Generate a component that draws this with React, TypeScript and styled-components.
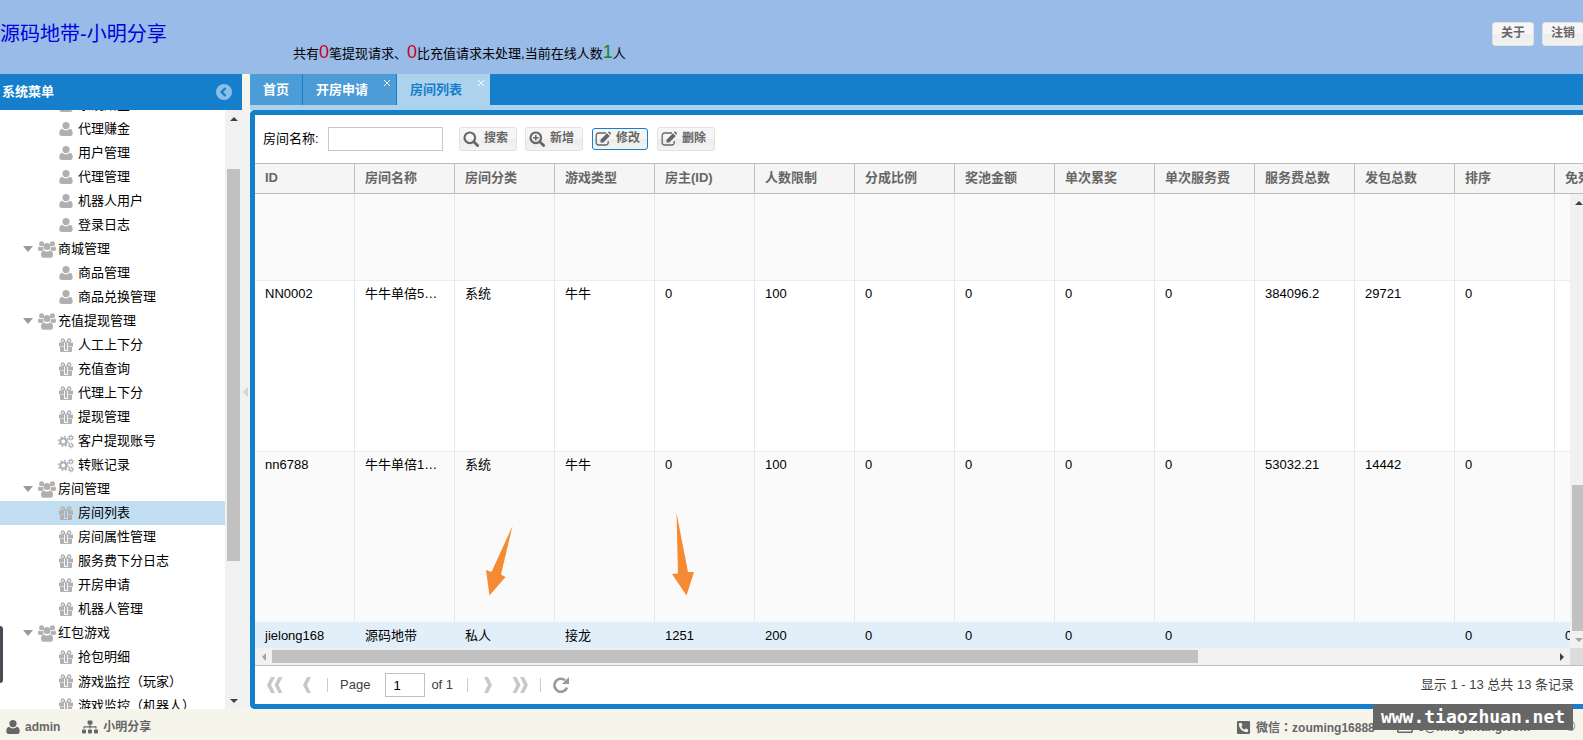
import React from "react";
import styled, { createGlobalStyle, css } from "styled-components";
import { FaSitemap, FaPhoneSquareAlt, FaRegEnvelope } from "react-icons/fa";

const Global = createGlobalStyle`
  * { box-sizing: border-box; }
  html, body, #root { height: 100%; }
  body { margin: 0; overflow: hidden; }
  body, button, input { font-family: "Liberation Sans", "Noto Sans CJK SC", sans-serif; font-size: 13px; }
  body { color: #000; line-height: 16px; }
`;

const Page = styled.div`
  position: relative;
  display: flex;
  flex-direction: column;
  height: 100vh;
  background: #f5f5ec;
`;

const Banner = styled.header`
  display: flex;
  flex: none;
  align-items: flex-start;
  height: 74px;
  background: #99bbe8;
`;

const Brand = styled.a`
  width: 293px;
  padding-top: 20px;
  font-size: 20px;
  line-height: 28px;
  color: #0000dc;
  text-decoration: none;
`;

const Notice = styled.p`
  flex: 1;
  margin: 0;
  padding-top: 40px;
  line-height: 24px;
  white-space: nowrap;
`;

const Count = styled.span<{ $tone: string }>`
  font-size: 18px;
  color: ${(p) => p.$tone};
`;

const BannerActions = styled.div`
  display: flex;
  gap: 8px;
  padding-top: 22px;
  margin-right: -1px;
`;

const Button = styled.button<{ $active?: boolean }>`
  display: flex;
  flex: none;
  align-items: center;
  gap: 5px;
  width: 58px;
  height: 24px;
  padding: 0 0 0 3px;
  border: 1px solid #e1e1e1;
  border-radius: 3px;
  background: linear-gradient(#f6f6f6 50%, #ededed 50%, #f3f3f3);
  color: #666;
  font-size: 12px;
  font-weight: bold;
  line-height: 16px;
  ${(p) => p.$active && css`
    width: 56px;
    height: 22px;
    margin: 0 1px;
    border-color: #157fcc;
    padding-left: 2px;
  `}
`;

const ButtonText = styled.span`
  padding-bottom: 2px;
`;

const BannerButton = styled(Button)`
  justify-content: center;
  width: 42px;
  padding: 0;
`;

const Body = styled.div`
  display: flex;
  flex: 1;
  min-height: 0;
`;

const Sidebar = styled.aside`
  display: flex;
  flex: none;
  flex-direction: column;
  width: 242px;
`;

const SidebarHead = styled.h2`
  display: flex;
  flex: none;
  align-items: center;
  justify-content: space-between;
  height: 36px;
  margin: 0;
  padding: 0 10px 0 2px;
  background: #157fcc;
  color: #fff;
  font-size: 13px;
`;

const Collapse = styled.button`
  display: flex;
  width: 16px;
  height: 16px;
  padding: 0;
  border: 0;
  border-radius: 8px;
  background: #8abfe5;
`;

const TreeArea = styled.div`
  display: flex;
  flex: 1;
  min-height: 0;
  background: #fff;
`;

const TreeView = styled.div`
  display: flex;
  flex: 1;
  flex-direction: column;
  height: 100%;
  overflow: hidden;
`;

const Tree = styled.ul`
  margin: -17px 0 0;
  padding: 0;
  list-style: none;
`;

const TreeRow = styled.li<{ $group?: boolean; $selected?: boolean }>`
  display: flex;
  flex: none;
  align-items: center;
  height: 24px;
  padding-left: ${(p) => (p.$group ? 23 : 58)}px;
  background: ${(p) => (p.$selected ? "#c1ddf1" : "transparent")};
  white-space: nowrap;
`;

const TreeIcon = styled.span`
  display: flex;
  justify-content: center;
  width: 16px;
  margin-right: 4px;
  color: #b0b0b0;
`;

const GroupIcon = styled(TreeIcon)`
  width: 18px;
  margin: 0 2px 0 5px;
`;

const Caret = styled.span`
  border: 5px solid transparent;
  border-top: 6px solid #999;
  border-bottom: 0;
`;

const Punctuation = styled.span`
  font-family: "Noto Sans CJK TC", sans-serif;
`;

const ScrollY = styled.div`
  display: flex;
  flex: none;
  flex-direction: column;
  align-items: center;
  width: 17px;
  background: #f1f1f1;
`;

const GridScroll = styled(ScrollY)`
  margin-right: -4px;
`;

const ScrollArrow = styled.span<{ $dir: "up" | "down" | "left" | "right"; $dim?: boolean }>`
  display: flex;
  flex: none;
  align-items: center;
  justify-content: center;
  width: 17px;
  height: 17px;
  &::after {
    content: "";
    border: 4px solid transparent;
    ${(p) => {
      const c = p.$dim ? "#a3a3a3" : "#404040";
      if (p.$dir === "up") return `border-bottom-color: ${c}; border-top: 0;`;
      if (p.$dir === "down") return `border-top-color: ${c}; border-bottom: 0;`;
      if (p.$dir === "left") return `border-right-color: ${c}; border-left: 0;`;
      return `border-left-color: ${c}; border-right: 0;`;
    }}
  }
`;

const Spacer = styled.span<{ $grow: number }>`
  flex: ${(p) => p.$grow} 1 0;
`;

const Thumb = styled.span<{ $grow: number }>`
  flex: ${(p) => p.$grow} 1 0;
  align-self: stretch;
  margin: 0 2px;
  background: #c1c1c1;
`;

const Splitter = styled.div`
  display: flex;
  flex: none;
  flex-direction: column;
  justify-content: center;
  align-items: center;
  width: 8px;
  background: linear-gradient(#f5f5ec 36px, #f2f2f2 36px);
`;

const Main = styled.main`
  display: flex;
  flex: 1;
  flex-direction: column;
  min-width: 0;
`;

const Tabs = styled.nav`
  display: flex;
  flex: none;
  gap: 1px;
  height: 36px;
  border-bottom: 5px solid #add2ed;
  background: #157fcc;
`;

const Tab = styled.button<{ $active?: boolean; $wide?: boolean }>`
  display: flex;
  flex: none;
  justify-content: space-between;
  width: ${(p) => (p.$wide ? 93 : 52)}px;
  padding: 8px 0 0 13px;
  border: 0;
  background: ${(p) => (p.$active ? "#add2ed" : "#4b9cd7")};
  color: ${(p) => (p.$active ? "#157fcc" : "#fff")};
  font-weight: bold;
  line-height: 16px;
`;

const TabClose = styled.svg`
  width: 8px;
  height: 8px;
  margin: -3px 5px 0 0;
  stroke: #fff;
`;

const Frame = styled.section`
  display: flex;
  flex: 1;
  flex-direction: column;
  min-height: 0;
  overflow: hidden;
  border: 5px solid #157fcc;
  border-right: 0;
  border-radius: 5px 0 0 5px;
  background: #fff;
`;

const Toolbar = styled.form`
  display: flex;
  flex: none;
  align-items: center;
  gap: 8px;
  height: 48px;
  padding-left: 8px;
`;

const Label = styled.label`
  width: 57px;
  white-space: nowrap;
`;

const NameInput = styled.input`
  width: 115px;
  height: 24px;
  margin-right: 8px;
  border: 1px solid #c8c8c8;
  background: #fff;
`;

const GridHead = styled.div`
  flex: none;
  overflow: hidden;
  border: solid #bbb;
  border-width: 1px 0;
  background: #f5f5f5;
`;

const Table = styled.table`
  width: 1400px;
  border-collapse: separate;
  border-spacing: 0;
  table-layout: fixed;
`;

const HeadCell = styled.th`
  width: 100px;
  height: 29px;
  padding: 0 0 1px 10px;
  border-right: 1px solid #c0c0c0;
  color: #666;
  text-align: left;
  white-space: nowrap;
`;

const GridArea = styled.div`
  display: flex;
  flex: 1;
  min-height: 0;
`;

const GridView = styled.div`
  display: flex;
  flex: 1;
  flex-direction: column;
  justify-content: flex-end;
  min-width: 0;
  overflow: hidden;
`;

const Row = styled.tr<{ $alt?: boolean; $selected?: boolean }>`
  background: ${(p) => (p.$selected ? "#e2eff8" : p.$alt ? "#fafafa" : "#fff")};
`;

const Cell = styled.td<{ $short?: boolean; $last?: boolean }>`
  height: ${(p) => (p.$last ? 26 : p.$short ? 86 : 171)}px;
  padding: 5px 0 0 10px;
  border-right: ${(p) => (p.$last ? 0 : 1)}px solid #e8e8e8;
  border-top: 1px solid ${(p) => (p.$last || p.$short ? "transparent" : "#ededed")};
  line-height: 16px;
  vertical-align: top;
  white-space: nowrap;
`;

const ScrollX = styled.div`
  display: flex;
  flex: none;
  align-items: center;
  height: 17px;
  border-right: 13px solid #dcdcdc;
  background: #f1f1f1;
`;

const ThumbX = styled(Thumb)`
  margin: 2px 0;
`;

const Pager = styled.footer`
  display: flex;
  flex: none;
  align-items: center;
  height: 39px;
  padding: 0 9px 0 8px;
  border-top: 1px solid #c0c0c0;
  color: #404040;
`;

const PageButton = styled.button`
  display: flex;
  align-items: center;
  justify-content: center;
  width: 24px;
  height: 24px;
  padding: 0;
  border: 0;
  background: none;
  & + & { margin-left: 8px; }
`;

const Divider = styled.span<{ $apart?: boolean }>`
  width: 1px;
  height: 14px;
  margin: 0 8px 0 ${(p) => (p.$apart ? 14 : 8)}px;
  background: #ccc;
`;

const PageInput = styled.input`
  width: 40px;
  height: 24px;
  margin: 0 6px 0 15px;
  padding: 0 7px;
  border: 1px solid #c0c0c0;
`;

const PageLabel = styled.label`
  margin-left: 4px;
`;

const Summary = styled.output`
  margin-left: auto;
`;

const StatusBar = styled.footer`
  display: flex;
  flex: none;
  align-items: center;
  gap: 22px;
  height: 31px;
  padding: 5px 8px 0 6px;
  overflow: hidden;
  color: #666;
  font-size: 12px;
  font-weight: bold;
`;

const StatusItem = styled.span<{ $push?: boolean }>`
  display: flex;
  flex: none;
  align-items: center;
  gap: 5px;
  margin-left: ${(p) => (p.$push ? "auto" : 0)};
  white-space: nowrap;
`;

const Copyright = styled.span`
  margin-left: 14px;
  font-weight: normal;
`;

const Watermark = styled.div`
  position: absolute;
  right: 10px;
  bottom: 10px;
  width: 200px;
  height: 26px;
  background: #666;
  color: #fff;
  font: bold 18px/26px "DejaVu Sans Mono", monospace;
  text-align: center;
`;

const EdgeHandle = styled.div`
  position: absolute;
  left: 0;
  bottom: 57px;
  width: 3px;
  height: 57px;
  border-radius: 0 3px 3px 0;
  background: #4a4a55;
`;

const Pointers = styled.svg`
  position: absolute;
  left: 480px;
  bottom: 142px;
`;

const UserIcon = () => (
  <svg width="14" height="14" viewBox="0 0 14 14" fill="currentColor">
    <circle cx="7" cy="3.6" r="3.6" />
    <path d="M3.200 6.800C4.200 7.900 5.500 8.400 7 8.400s2.800-.5 3.800-1.600C13 7 13.700 9 13.700 11.500c0 1.600-.9 2.500-2.300 2.500H2.600C1.200 14 .3 13.100.3 11.500.3 9 1 7 3.200 6.800Z" />
  </svg>
);

const GroupGlyph = () => (
  <svg width="18" height="17" viewBox="0 0 18 17" fill="currentColor">
    <circle cx="3.600" cy="2.700" r="2.500" />
    <circle cx="14.400" cy="2.700" r="2.500" />
    <circle cx="9" cy="5.600" r="3.500" />
    <path d="M1.500 5.500c1.100.8 2.500.8 3.500.3C4.900 7 5.200 8 6 9c-1 0-1.900.3-2.500.9H2C.7 9.900 0 9.300 0 8c0-1.400.4-2.500 1.500-2.500ZM16.500 5.500c-1.100.8-2.500.8-3.500.3.100 1.200-.2 2.200-1 3.200 1 0 1.900.3 2.500.9H16c1.300 0 2-.6 2-1.900 0-1.400-.4-2.500-1.500-2.500Z" />
    <path d="M5.500 9.500c2.200 1.500 4.800 1.500 7 0 1.700.3 2.500 2 2.500 4.600 0 1.700-.9 2.600-2.300 2.600H5.300C3.900 16.700 3 15.800 3 14.100c0-2.600.8-4.300 2.500-4.600Z" />
  </svg>
);

const GiftIcon = () => (
  <svg width="14" height="14" viewBox="0 0 14 14" fill="currentColor">
    <path d="M6 4C5.500 2 4.700 1 3.700 1a1.500 1.500 0 0 0 0 3ZM8 4c.5-2 1.300-3 2.300-3a1.500 1.500 0 0 1 0 3Z" fill="none" stroke="currentColor" strokeWidth="1.300" />
    <path d="M0 4.500h5V8.500H0ZM9 4.500h5V8.500H9ZM1 9h4v5H2a1 1 0 0 1-1-1ZM9 9h4v4a1 1 0 0 1-1 1H9ZM5.900 4.500h2.200V12H5.900ZM5 13h4v1H5Z" />
  </svg>
);

const CogsIcon = () => (
  <svg width="17" height="15" viewBox="0 0 17 15" fill="none" stroke="currentColor">
    <circle cx="5.700" cy="7.500" r="3.200" strokeWidth="2.200" />
    <circle cx="5.700" cy="7.500" r="5" strokeWidth="1.600" strokeDasharray="2 1.927" />
    <circle cx="13.700" cy="3.400" r="1.700" strokeWidth="1.300" />
    <circle cx="13.700" cy="3.400" r="2.700" strokeWidth="1" strokeDasharray="1.200 .921" />
    <circle cx="13.700" cy="11.600" r="1.700" strokeWidth="1.300" />
    <circle cx="13.700" cy="11.600" r="2.700" strokeWidth="1" strokeDasharray="1.200 .921" />
  </svg>
);

const SearchIcon = ({ plus }: { plus?: boolean }) => (
  <svg width="16" height="16" viewBox="0 0 16 16" fill="none" stroke="currentColor">
    <circle cx="6.800" cy="6.800" r="5.300" strokeWidth="2.200" />
    <path d="m11 11 3.600 3.600" strokeWidth="2.800" strokeLinecap="round" />
    {plus && <path d="M6.800 4v5.600M4 6.800h5.600" strokeWidth="1.500" />}
  </svg>
);

const EditIcon = () => (
  <svg width="16" height="16" viewBox="0 0 16 16" fill="none" stroke="currentColor">
    <path d="M11 2H3.500a2.300 2.300 0 0 0-2.300 2.300v7.400A2.300 2.300 0 0 0 3.500 14h7.400a2.300 2.300 0 0 0 2.300-2.300V10" strokeWidth="1.300" />
    <path d="M5.500 11.500V8.700L12 2.200l2.800 2.800-6.500 6.500Z" fill="currentColor" stroke="none" />
    <path d="m12.900 1.300.6-.5a1 1 0 0 1 1.300 0l1 1.100a1 1 0 0 1 0 1.200l-.5.600Z" fill="currentColor" stroke="none" />
  </svg>
);

const CollapseIcon = () => (
  <svg width="16" height="16" viewBox="0 0 16 16" fill="none" stroke="#157fcc" strokeWidth="2.400">
    <path d="M9.500 4 5.700 8l3.800 4" />
  </svg>
);

const SplitIcon = () => (
  <svg width="6" height="10" viewBox="0 0 6 10" fill="#d4d4d4">
    <path d="M5 0v10L0 5Z" />
  </svg>
);

const CloseIcon = () => (
  <TabClose viewBox="0 0 8 8" aria-hidden="true">
    <path d="m1 1 6 6M7 1 1 7" />
  </TabClose>
);

const Chevrons = ({ right, two }: { right?: boolean; two?: boolean }) => (
  <svg width="18" height="18" viewBox="0 0 18 18" fill="#c8c8c8">
    <g transform={right ? "translate(18 0) scale(-1 1)" : undefined}>
      {two ? (
        <path d="M5 1h4L5 9l4 8H5L1 9ZM12.500 1h4l-4 8 4 8h-4l-4-8Z" />
      ) : (
        <path d="M9 1h4L9 9l4 8H9L5 9Z" />
      )}
    </g>
  </svg>
);

const ReloadIcon = () => (
  <svg width="18" height="18" viewBox="0 0 18 18" fill="none" stroke="#999" strokeWidth="2.600">
    <path d="M15 11.500A6.500 6.500 0 1 1 13 4.200" />
    <path d="M17 1v7h-7Z" fill="#999" stroke="none" />
  </svg>
);

const Text = ({ value }: { value: string }) => (
  <span>
    {value.split(/([（）：])/).map((part, i) =>
      i % 2 ? <Punctuation key={i}>{part}</Punctuation> : part
    )}
  </span>
);

type Kind = "user" | "group" | "gift" | "cogs";
const menu: [Kind, string][] = [
  ["user", "系统赠金"], ["user", "代理赚金"], ["user", "用户管理"], ["user", "代理管理"],
  ["user", "机器人用户"], ["user", "登录日志"], ["group", "商城管理"], ["user", "商品管理"],
  ["user", "商品兑换管理"], ["group", "充值提现管理"], ["gift", "人工上下分"], ["gift", "充值查询"],
  ["gift", "代理上下分"], ["gift", "提现管理"], ["cogs", "客户提现账号"], ["cogs", "转账记录"],
  ["group", "房间管理"], ["gift", "房间列表"], ["gift", "房间属性管理"], ["gift", "服务费下分日志"],
  ["gift", "开房申请"], ["gift", "机器人管理"], ["group", "红包游戏"], ["gift", "抢包明细"],
  ["gift", "游戏监控（玩家）"], ["gift", "游戏监控（机器人）"],
];
const icons = { user: <UserIcon />, group: <GroupGlyph />, gift: <GiftIcon />, cogs: <CogsIcon /> };

const columns = ["ID", "房间名称", "房间分类", "游戏类型", "房主(ID)", "人数限制", "分成比例",
  "奖池金额", "单次累奖", "单次服务费", "服务费总数", "发包总数", "排序", "免死号码"];
const rows = [
  columns.map(() => ""),
  ["NN0002", "牛牛单倍5…", "系统", "牛牛", "0", "100", "0", "0", "0", "0", "384096.2", "29721", "0", ""],
  ["nn6788", "牛牛单倍1…", "系统", "牛牛", "0", "100", "0", "0", "0", "0", "53032.21", "14442", "0", ""],
  ["jielong168", "源码地带", "私人", "接龙", "1251", "200", "0", "0", "0", "0", "", "", "0", "0"],
];

export default function App() {
  return (
    <Page>
      <Global />
      <Banner>
        <Brand href="#">源码地带-小明分享</Brand>
        <Notice>
          共有<Count $tone="#d0021b">0</Count>笔提现请求、<Count $tone="#d0021b">0</Count>
          比充值请求未处理,当前在线人数<Count $tone="#118a1b">1</Count>人
        </Notice>
        <BannerActions>
          <BannerButton><ButtonText>关于</ButtonText></BannerButton>
          <BannerButton><ButtonText>注销</ButtonText></BannerButton>
        </BannerActions>
      </Banner>
      <Body>
        <Sidebar>
          <SidebarHead>
            系统菜单
            <Collapse aria-label="collapse"><CollapseIcon /></Collapse>
          </SidebarHead>
          <TreeArea>
            <TreeView>
              <Tree>
                {menu.map(([kind, text]) => (
                  <TreeRow key={text} $group={kind === "group"} $selected={text === "房间列表"}>
                    {kind === "group" ? (
                      <><Caret /><GroupIcon>{icons.group}</GroupIcon></>
                    ) : (
                      <TreeIcon>{icons[kind]}</TreeIcon>
                    )}
                    <Text value={text} />
                  </TreeRow>
                ))}
              </Tree>
            </TreeView>
            <ScrollY>
              <ScrollArrow $dir="up" />
              <Spacer $grow={42} />
              <Thumb $grow={392} />
              <Spacer $grow={131} />
              <ScrollArrow $dir="down" />
            </ScrollY>
          </TreeArea>
        </Sidebar>
        <Splitter><SplitIcon /></Splitter>
        <Main>
          <Tabs>
            <Tab>首页</Tab>
            <Tab $wide>开房申请<CloseIcon /></Tab>
            <Tab $wide $active>房间列表<CloseIcon /></Tab>
          </Tabs>
          <Frame>
            <Toolbar onSubmit={(e) => e.preventDefault()}>
              <Label htmlFor="room">房间名称:</Label>
              <NameInput id="room" />
              <Button><SearchIcon /><ButtonText>搜索</ButtonText></Button>
              <Button><SearchIcon plus /><ButtonText>新增</ButtonText></Button>
              <Button $active><EditIcon /><ButtonText>修改</ButtonText></Button>
              <Button><EditIcon /><ButtonText>删除</ButtonText></Button>
            </Toolbar>
            <GridHead>
              <Table>
                <thead><tr>{columns.map((c) => <HeadCell key={c}>{c}</HeadCell>)}</tr></thead>
              </Table>
            </GridHead>
            <GridArea>
              <GridView>
                <Table>
                  <tbody>
                    {rows.map((r, i) => (
                      <Row key={i} $alt={i % 2 === 0} $selected={i === 3}>
                        {r.map((v, j) => <Cell key={j} $short={i === 0} $last={i === 3}>{v}</Cell>)}
                      </Row>
                    ))}
                  </tbody>
                </Table>
              </GridView>
              <GridScroll>
                <ScrollArrow $dir="up" />
                <Spacer $grow={274} />
                <Thumb $grow={146} />
                <ScrollArrow $dir="down" $dim />
              </GridScroll>
            </GridArea>
            <ScrollX>
              <ScrollArrow $dir="left" $dim />
              <ThumbX $grow={926} />
              <Spacer $grow={355} />
              <ScrollArrow $dir="right" />
            </ScrollX>
            <Pager>
              <PageButton aria-label="first"><Chevrons two /></PageButton>
              <PageButton aria-label="previous"><Chevrons /></PageButton>
              <Divider />
              <PageLabel htmlFor="page">Page</PageLabel>
              <PageInput id="page" defaultValue="1" />
              of 1
              <Divider $apart />
              <PageButton aria-label="next"><Chevrons right /></PageButton>
              <PageButton aria-label="last"><Chevrons right two /></PageButton>
              <Divider />
              <PageButton aria-label="refresh"><ReloadIcon /></PageButton>
              <Summary>显示 1 - 13 总共 13 条记录</Summary>
            </Pager>
          </Frame>
        </Main>
      </Body>
      <StatusBar>
        <StatusItem><UserIcon />admin</StatusItem>
        <StatusItem><FaSitemap size={16} />小明分享</StatusItem>
        <StatusItem $push><FaPhoneSquareAlt size={15} /><Text value="微信：zouming16888" /></StatusItem>
        <StatusItem><FaRegEnvelope size={16} />e@mingkwang.com</StatusItem>
        <Copyright>©</Copyright>
      </StatusBar>
      <Pointers width="220" height="90" viewBox="480 508 220 90" fill="#f68a33">
        <path d="M512.500 526 501 574.500 505.500 577 489.500 595.500 486 570 491.500 572Z" />
        <path d="M676.500 513 688 572 694 572 686.500 595.500 672 574 678 573.500Z" />
      </Pointers>
      <EdgeHandle />
      <Watermark>www.tiaozhuan.net</Watermark>
    </Page>
  );
}
